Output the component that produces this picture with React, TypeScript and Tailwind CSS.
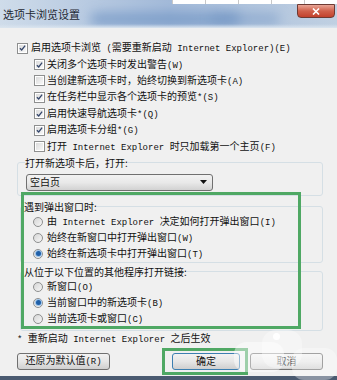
import React from 'react';

const MONO = "font-['Liberation_Mono',monospace] text-[9px]";

// split text so ASCII runs render in a narrow mono face (like SimSun's half-width Latin)
const T = ({ s }: { s: string }) => (
  <span className="whitespace-pre">
    {s.split(/([\x20-\x7e]+)/).map((p, i) =>
      /[\x20-\x7e]/.test(p) ? (
        <span key={i} className={MONO}>
          {p}
        </span>
      ) : (
        <React.Fragment key={i}>{p}</React.Fragment>
      )
    )}
  </span>
);

const Check = ({ on }: { on: boolean }) => (
  <span className="w-[11px] h-[11px] shrink-0 border border-[#8e8f8f] bg-white p-[1px]">
    <span className="flex w-full h-full items-center justify-center bg-gradient-to-br from-[#dcdcdc] to-[#f8f8f8]">
      {on && (
        <svg width="8" height="8" viewBox="0 0 8 8">
          <path d="M1 4.2 L3.1 6.3 L7 1.3" stroke="#34466b" strokeWidth="1.5" fill="none" />
        </svg>
      )}
    </span>
  </span>
);

const Radio = ({ on }: { on: boolean }) => (
  <span className="w-[10px] h-[10px] shrink-0 rounded-full border border-[#8e8f8f] bg-gradient-to-br from-[#d6d6d6] to-[#f6f6f6] flex items-center justify-center">
    {on && <span className="w-[5px] h-[5px] rounded-full bg-[#1f5fa8] ring-1 ring-[#9cc3ea]" />}
  </span>
);

const CheckRow = ({ on, text, indent }: { on: boolean; text: string; indent?: boolean }) => (
  <div className={`flex items-center h-[16.4px] ${indent ? 'pl-[34px] gap-[2px]' : 'pl-[17px] gap-[3px]'}`}>
    <Check on={on} />
    <T s={text} />
  </div>
);

const RadioRow = ({ on, text }: { on: boolean; text: string }) => (
  <div className="flex items-center h-[16px] pl-[9px] gap-[4px]">
    <Radio on={on} />
    <T s={text} />
  </div>
);

const Btn = ({ label, w, main }: { label: string; w: string; main?: boolean }) => (
  <div
    className={`${w} h-[17px] rounded-[3px] border ${main ? 'border-[#3c7fb1]' : 'border-[#707070]'} bg-gradient-to-b from-[#f2f2f2] via-[#e6e6e6] to-[#cfcfcf] flex items-center justify-center`}
  >
    <T s={label} />
  </div>
);

export default function App() {
  const checks = [
    { on: true, text: '关闭多个选项卡时发出警告(W)' },
    { on: false, text: '当创建新选项卡时，始终切换到新选项卡(A)' },
    { on: true, text: '在任务栏中显示各个选项卡的预览*(S)' },
    { on: true, text: '启用快速导航选项卡*(Q)' },
    { on: true, text: '启用选项卡分组*(G)' },
    { on: false, text: '打开 Internet Explorer 时只加载第一个主页(F)' },
  ];

  return (
    <div className="relative w-[337px] h-[380px] overflow-hidden bg-[#f0f0f0] text-[10px] leading-none text-[#111] font-['Noto_Sans_CJK_SC','Noto_Sans',sans-serif]">
      {/* title bar */}
      <div className="relative h-[28px] overflow-hidden bg-gradient-to-r from-[#cfdcea] via-[#a3bad9] to-[#c0d0e2]">
        <div className="absolute left-[90px] top-[13px] w-[150px] h-[12px] rounded-full bg-[#6088bd] blur-[6px] opacity-60" />
        <div className="absolute left-[210px] top-[14px] w-[70px] h-[10px] rounded-full bg-[#6a8fc0] blur-[6px] opacity-50" />
        <div className="absolute left-0 right-0 bottom-0 h-[4px] bg-gradient-to-b from-transparent to-[#dbe5ef]" />
        <div className="relative flex items-center h-full pl-[3px] text-[11px] text-[#1e2833]">选项卡浏览设置</div>
      </div>

      {/* window behind, peeking at top right */}
      <div className="absolute left-[172px] top-0 w-[165px] h-[4px] bg-white flex">
        {[0, 1, 2, 3, 4].map((i) => (
          <div key={i} className="w-[33px] h-full border-l border-[#c8c8c8]" />
        ))}
      </div>

      {/* close button */}
      <div className="absolute left-[297px] top-[4px] w-[38px] h-[14px] rounded-b-[4px] border border-[#6e3a33] bg-gradient-to-b from-[#e8a596] via-[#d0604b] to-[#c2412c] flex items-center justify-center">
        <svg width="8" height="7" viewBox="0 0 8 7">
          <path d="M1 0.5 L7 6.5 M7 0.5 L1 6.5" stroke="white" strokeWidth="1.6" />
        </svg>
      </div>

      {/* body */}
      <div className="pt-[12px]">
        <CheckRow on={true} text="启用选项卡浏览 (需要重新启动 Internet Explorer)(E)" />
        {checks.map((c) => (
          <CheckRow key={c.text} on={c.on} text={c.text} indent />
        ))}

        <fieldset className="mt-[1px] ml-[17px] w-[306px] border border-[#d5dfe5] rounded-[3px] px-[7px] pb-[4px]">
          <legend className="h-[14px] leading-[14px]">打开新选项卡后，打开:</legend>
          <div className="mt-[4px] ml-[1px] w-[187px] h-[17px] rounded-[3px] border border-[#707070] bg-gradient-to-b from-[#f2f2f2] via-[#e9e9e9] to-[#d2d2d2] flex items-center justify-between pl-[3px] pr-[5px]">
            <span>空白页</span>
            <svg width="7" height="4" viewBox="0 0 7 4">
              <path d="M0 0 L7 0 L3.5 4 Z" fill="#111" />
            </svg>
          </div>
        </fieldset>

        <fieldset className="mt-[4px] ml-[20px] w-[303px] border border-[#d5dfe5] rounded-[3px] px-[3px]">
          <legend className="h-[14px] leading-[14px]">遇到弹出窗口时:</legend>
          <RadioRow on={false} text="由 Internet Explorer 决定如何打开弹出窗口(I)" />
          <RadioRow on={false} text="始终在新窗口中打开弹出窗口(W)" />
          <RadioRow on={true} text="始终在新选项卡中打开弹出窗口(T)" />
        </fieldset>

        <fieldset className="mt-[2px] ml-[20px] w-[303px] border border-[#d5dfe5] rounded-[3px] px-[3px] pb-[3px]">
          <legend className="h-[14px] leading-[14px]">从位于以下位置的其他程序打开链接:</legend>
          <RadioRow on={false} text="新窗口(O)" />
          <RadioRow on={true} text="当前窗口中的新选项卡(B)" />
          <RadioRow on={false} text="当前选项卡或窗口(C)" />
        </fieldset>

        <div className="mt-[1px] h-[14px] pl-[17px] flex items-center">
          <T s="* 重新启动 Internet Explorer 之后生效" />
        </div>

        <div className="mt-[7px] flex items-center pl-[17px] pr-[14px]">
          <Btn label="还原为默认值(R)" w="w-[93px]" />
          <div className="ml-auto flex gap-[10px]">
            <Btn label="确定" w="w-[68px]" main />
            <Btn label="取消" w="w-[73px]" />
          </div>
        </div>
      </div>

      {/* bottom edge */}
      <div className="absolute left-0 bottom-0 w-full h-[4px] bg-[#4a5a70]" />

      {/* green annotation boxes */}
      <div className="absolute left-[21px] top-[192px] w-[280px] h-[137px] border-[3px] border-[#4fa864]" />
      <div className="absolute left-[162px] top-[348px] w-[86px] h-[27px] border-[3px] border-[#4fa864]" />

      {/* watermark */}
      <div className="absolute left-[234px] top-[342px] w-[50px] h-[30px] rounded-[12px] bg-white/45" />
      <div className="absolute left-[262px] top-[330px] w-[40px] h-[38px] rounded-[14px] bg-white/35" />
      <div className="absolute left-[292px] top-[348px] w-[45px] h-[32px] rounded-[12px] bg-white/35" />
      <div className="absolute left-[273px] top-[333px] w-[7px] h-[7px] rounded-full bg-white" />
    </div>
  );
}
